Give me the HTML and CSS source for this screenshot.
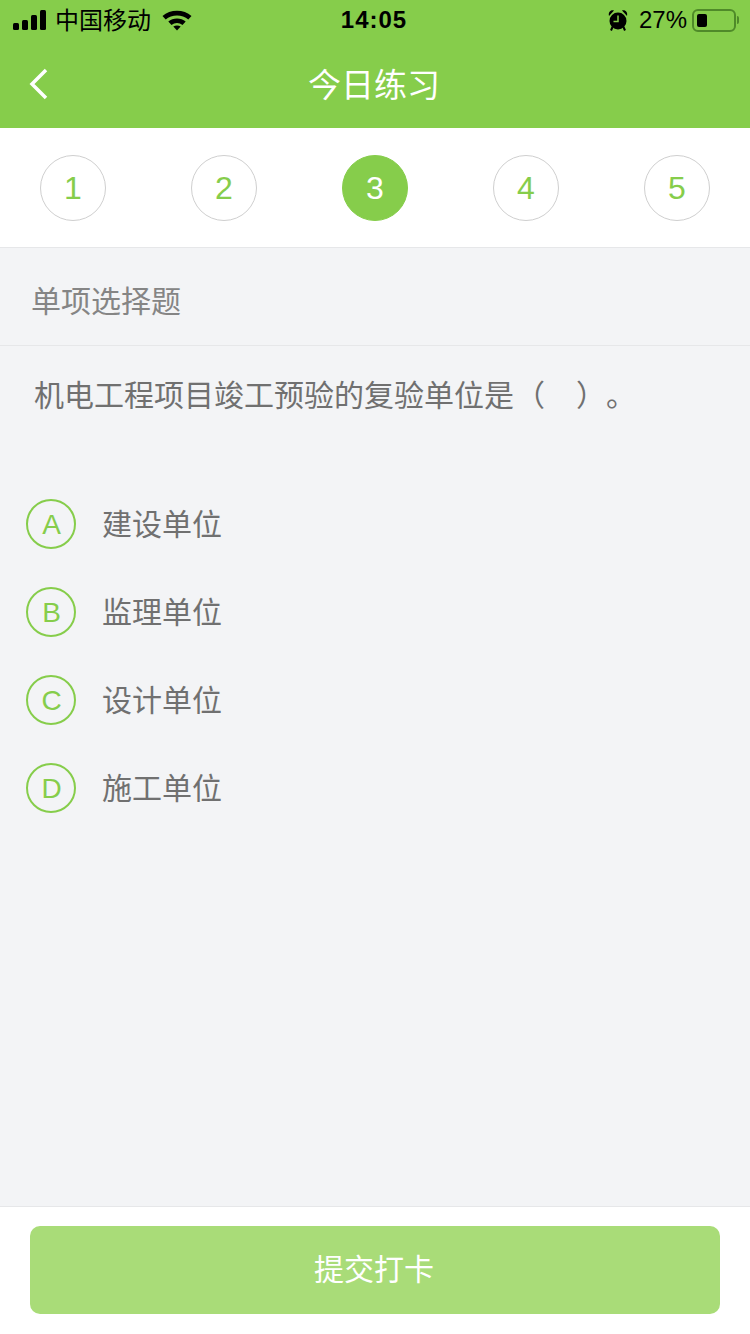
FILE: index.html
```html
<!DOCTYPE html>
<html lang="zh-cn">

<head>
    <meta charset="UTF-8">
    <meta name="viewport" content="width=device-width, initial-scale=1.0">
    <title>今日练习</title>
    <link rel="stylesheet" href="styles.css">
</head>

<body>
    <div class="page">
        <div class="top">
            <div class="status">
                <div class="status-left">
                    <div class="signal"><i class="s1"></i><i class="s2"></i><i class="s3"></i><i class="s4"></i></div>
                    <span class="carrier">中国移动</span>
                    <svg class="wifi" width="30" height="22" viewBox="0 0 30 22">
                        <path d="M0.500 7C8 0 22 0 29.500 7L26.300 10.500C20.300 5 9.700 5 3.700 10.500Z" />
                        <path d="M6.300 12.500C11 8.500 19 8.500 23.700 12.500L20.500 16C17.300 13.300 12.700 13.300 9.500 16Z" />
                        <path d="M11.300 17.500C13.500 16 16.500 16 18.700 17.500L15 21.500Z" />
                    </svg>
                </div>
                <div class="time">14:05</div>
                <div class="status-right">
                    <svg class="alarm" width="20" height="22" viewBox="0 0 20 22">
                        <circle cx="10" cy="12" r="8.500" />
                        <path d="M1 7C0 3.500 2.500 0.500 6 1.500ZM19 7C20 3.500 17.500 0.500 14 1.500Z" />
                        <path d="M4.500 18L3 21.500M15.500 18L17 21.500" stroke="#000" stroke-width="2" />
                        <path d="M10 6.500V12.500H5.500" stroke="#86cd4b" stroke-width="1.500" fill="none" />
                    </svg>
                    <span class="percent">27%</span>
                    <div class="battery"><div class="level"></div></div>
                    <div class="battery-tip"></div>
                </div>
            </div>
            <div class="nav">
                <svg class="back" width="20" height="32" viewBox="0 0 20 32">
                    <path d="M17 2L3 16L17 30" />
                </svg>
                <div class="title">今日练习</div>
            </div>
        </div>

        <ul class="steps">
            <li>1</li>
            <li>2</li>
            <li class="active">3</li>
            <li>4</li>
            <li>5</li>
        </ul>

        <div class="main">
            <div class="type">单项选择题</div>
            <div class="question">机电工程项目竣工预验的复验单位是<span class="blank">（&nbsp;&nbsp;&nbsp;）</span><span class="stop">。</span></div>
            <ul class="options">
                <li><span class="letter">A</span><span class="text">建设单位</span></li>
                <li><span class="letter">B</span><span class="text">监理单位</span></li>
                <li><span class="letter">C</span><span class="text">设计单位</span></li>
                <li><span class="letter">D</span><span class="text">施工单位</span></li>
            </ul>
        </div>

        <div class="bot">
            <div class="submit">提交打卡</div>
        </div>
    </div>
</body>

</html>
```

FILE: styles.css
```css
* {
    list-style: none;
    margin: 0;
    padding: 0;
    box-sizing: border-box;
}

body {
    font-family: "Liberation Sans", "Noto Sans CJK SC", sans-serif;
    background-color: #f3f4f6;
}

.page {
    display: flex;
    flex-direction: column;
    width: 750px;
    height: 1334px;
    overflow: hidden;
}

.top {
    height: 128px;
    background-color: #86cd4b;
}

.status {
    display: flex;
    justify-content: space-between;
    align-items: center;
    height: 40px;
    padding: 0 11px 0 13px;
    color: #000;
}

.status-left,
.status-right {
    display: flex;
    align-items: center;
    width: 240px;
}

.status-right {
    justify-content: flex-end;
}

.signal {
    display: flex;
    align-items: flex-end;
    gap: 3px;
    height: 20px;
}

.signal i {
    display: block;
    width: 6px;
    background-color: #000;
    border-radius: 1.500px;
}

.signal .s1 { height: 7px; }
.signal .s2 { height: 10px; }
.signal .s3 { height: 15px; }
.signal .s4 { height: 20px; }

.carrier {
    margin: 2px 0 0 9px;
    font-size: 24px;
    line-height: 32px;
}

.wifi {
    margin-left: 11px;
}

.time {
    margin-right: 4px;
    font-size: 24px;
    font-weight: bold;
    letter-spacing: 1px;
}

.percent {
    margin-left: 11px;
    font-size: 24px;
}

.battery {
    width: 44px;
    height: 23px;
    margin-left: 5px;
    padding: 3px;
    border: 2px solid #4f8a29;
    border-radius: 6px;
}

.level {
    width: 10px;
    height: 100%;
    background-color: #000;
    border-radius: 2px;
}

.battery-tip {
    width: 2px;
    height: 8px;
    margin-left: 1px;
    background-color: #4f8a29;
    border-radius: 0 2px 2px 0;
}

.nav {
    position: relative;
    display: flex;
    justify-content: center;
    align-items: center;
    height: 88px;
}

.back {
    position: absolute;
    left: 29px;
    top: 28px;
    fill: none;
    stroke: #fff;
    stroke-width: 3.500px;
}

.title {
    margin: -3px 2px 0 0;
    font-size: 33px;
    color: #fff;
}

.steps {
    display: flex;
    justify-content: space-between;
    align-items: center;
    height: 120px;
    padding: 0 40px;
    background-color: #fff;
    border-bottom: 1px solid #e6e7e9;
}

.steps li {
    display: flex;
    justify-content: center;
    align-items: center;
    width: 66px;
    height: 66px;
    padding-top: 2px;
    border: 1px solid #cfcfcf;
    border-radius: 50%;
    font-size: 32px;
    color: #86cd4b;
}

.steps li.active {
    background-color: #86cd4b;
    border-color: #86cd4b;
    color: #fff;
}

.main {
    flex: 1;
}

.type {
    height: 98px;
    padding: 34px 0 0 31px;
    border-bottom: 1px solid #e6e7e9;
    font-size: 30px;
    line-height: 40px;
    color: #858585;
}

.question {
    padding: 29px 0 0 34px;
    font-size: 30px;
    line-height: 42px;
    color: #707070;
}

.blank {
    margin-left: 1px;
    word-spacing: 2px;
}

.stop {
    margin-left: 15px;
}

.options {
    padding: 82px 0 0 26px;
}

.options li {
    display: flex;
    align-items: center;
    height: 50px;
    margin-bottom: 38px;
}

.options .letter {
    display: flex;
    justify-content: center;
    align-items: center;
    width: 50px;
    height: 50px;
    padding: 2px 0 0 1px;
    border: 2px solid #86cd4b;
    border-radius: 50%;
    font-size: 28px;
    color: #86cd4b;
}

.options .text {
    margin: 2px 0 0 26px;
    font-size: 30px;
    line-height: 42px;
    color: #707070;
}

.bot {
    height: 128px;
    padding: 19px 30px 0;
    background-color: #fff;
    border-top: 1px solid #e6e7e9;
}

.submit {
    height: 88px;
    padding-right: 2px;
    background-color: #a9dc78;
    border-radius: 10px;
    font-size: 30px;
    line-height: 88px;
    text-align: center;
    color: #fff;
}
```
